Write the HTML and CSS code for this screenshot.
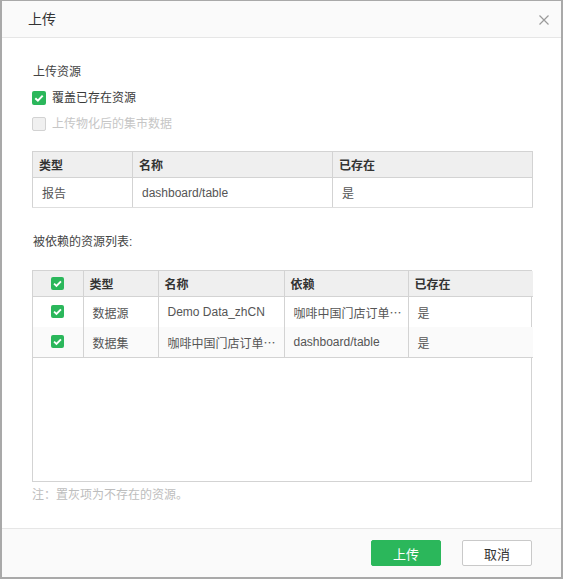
FILE: index.html
```html
<!DOCTYPE html>
<html lang="zh-CN">
<head>
<meta charset="utf-8">
<title>上传</title>
<link rel="stylesheet" href="styles.css">
</head>
<body>
<div class="dialog">
  <div class="dlg-header">
    <span class="dlg-title">上传</span>
    <span class="dlg-close">
      <svg width="10" height="10" viewBox="0 0 10 10"><path d="M0.5 0.5L9.5 9.5M9.5 0.5L0.5 9.5" stroke="#9a9a9a" stroke-width="1.2" fill="none"/></svg>
    </span>
  </div>
  <div class="dlg-body">
    <div class="section-title">上传资源</div>
    <label class="check-row first">
      <span class="cb checked"><svg width="14" height="14" viewBox="0 0 14 14"><path d="M3.3 7.2L5.9 9.7L10.7 4.6" stroke="#fff" stroke-width="2" fill="none"/></svg></span>
      <span class="check-label">覆盖已存在资源</span>
    </label>
    <label class="check-row second">
      <span class="cb disabled"></span>
      <span class="check-label muted">上传物化后的集市数据</span>
    </label>

    <table class="grid grid-main">
      <colgroup><col class="w100"><col class="w200"><col class="w200"></colgroup>
      <thead>
        <tr><th>类型</th><th>名称</th><th>已存在</th></tr>
      </thead>
      <tbody>
        <tr><td>报告</td><td>dashboard/table</td><td>是</td></tr>
      </tbody>
    </table>

    <div class="section-title dep-title">被依赖的资源列表:</div>

    <div class="grid-box">
      <table class="grid grid-dep">
        <colgroup><col class="w50"><col class="w75"><col class="w126"><col class="w124"><col class="w125"></colgroup>
        <thead>
          <tr>
            <th class="cb-cell"><span class="cb checked small"><svg width="13" height="13" viewBox="0 0 14 14"><path d="M3.3 7.2L5.9 9.7L10.7 4.6" stroke="#fff" stroke-width="2" fill="none"/></svg></span></th>
            <th>类型</th><th>名称</th><th>依赖</th><th>已存在</th>
          </tr>
        </thead>
        <tbody>
          <tr>
            <td class="cb-cell"><span class="cb checked small"><svg width="13" height="13" viewBox="0 0 14 14"><path d="M3.3 7.2L5.9 9.7L10.7 4.6" stroke="#fff" stroke-width="2" fill="none"/></svg></span></td>
            <td>数据源</td><td>Demo Data_zhCN</td><td>咖啡中国门店订单⋯</td><td>是</td>
          </tr>
          <tr class="alt last">
            <td class="cb-cell"><span class="cb checked small"><svg width="13" height="13" viewBox="0 0 14 14"><path d="M3.3 7.2L5.9 9.7L10.7 4.6" stroke="#fff" stroke-width="2" fill="none"/></svg></span></td>
            <td>数据集</td><td>咖啡中国门店订单⋯</td><td>dashboard/table</td><td>是</td>
          </tr>
        </tbody>
      </table>
    </div>

    <div class="note">注：置灰项为不存在的资源。</div>
  </div>
  <div class="dlg-footer">
    <button class="btn btn-primary">上传</button>
    <button class="btn btn-default">取消</button>
  </div>
</div>
</body>
</html>
```

FILE: styles.css
```css
html, body {
  margin: 0;
  padding: 0;
  background: #ffffff;
}

body {
  font-family: "Liberation Sans", "Noto Sans CJK SC", sans-serif;
  font-size: 12px;
  color: #444;
}

.dialog {
  width: 563px;
  height: 579px;
  box-sizing: border-box;
  border-style: solid;
  border-color: #a9a9a9;
  border-width: 1px 2px 2px 2px;
  display: flex;
  flex-direction: column;
  background: #fff;
}

.dlg-header {
  height: 36px;
  flex: 0 0 36px;
  background: #fafafa;
  border-bottom: 1px solid #e6e6e6;
  display: flex;
  align-items: center;
  justify-content: space-between;
  padding: 0 12px 0 26px;
}

.dlg-title {
  font-size: 14px;
  color: #333;
  line-height: 20px;
}

.dlg-close {
  display: flex;
  width: 10px;
  height: 10px;
  margin-top: 1px;
}

.dlg-body {
  flex: 1 1 auto;
  padding: 24px 29px 0 30px;
  display: flex;
  flex-direction: column;
}

.section-title {
  line-height: 20px;
  height: 20px;
  color: #444;
  padding-left: 1px;
}

.check-row {
  display: flex;
  align-items: center;
  height: 20px;
  gap: 6px;
}

.check-row.first {
  margin-top: 6px;
}

.check-row.second {
  margin-top: 6px;
}

.check-label {
  color: #3a3a3a;
  line-height: 20px;
}

.check-label.muted {
  color: #c6c6c6;
}

.cb {
  width: 14px;
  height: 14px;
  box-sizing: border-box;
  border-radius: 2px;
  display: inline-flex;
  flex: 0 0 auto;
}

.cb.checked {
  background: #2bb75b;
}

.cb.small {
  width: 13px;
  height: 13px;
}

.cb.disabled {
  background: #f0f0f0;
  border: 1px solid #d2d2d2;
}

.grid {
  border-collapse: collapse;
  table-layout: fixed;
  width: 500px;
}

.grid-main {
  margin-top: 17px;
  border: 1px solid #d3d3d3;
}

.grid th {
  background: #efefef;
  font-weight: bold;
  color: #333;
  text-align: left;
  height: 25px;
  padding: 0 6px;
  border: 1px solid #d3d3d3;
  white-space: nowrap;
}

.grid td {
  height: 29px;
  padding: 0 9px;
  border-left: 1px solid #d3d3d3;
  border-right: 1px solid #d3d3d3;
  color: #555;
  white-space: nowrap;
  overflow: hidden;
}

.grid-main tbody tr td {
  border-bottom: 1px solid #dedede;
}

.w100 { width: 100px; }
.w200 { width: 200px; }
.w50 { width: 50px; }
.w75 { width: 75px; }
.w126 { width: 126px; }
.w124 { width: 124px; }
.w125 { width: 125px; }

.dep-title {
  margin-top: 24px;
}

.grid-box {
  margin-top: 18px;
  width: 500px;
  height: 212px;
  box-sizing: border-box;
  border: 1px solid #d3d3d3;
}

.grid-dep {
  width: 498px;
}

.grid-dep th {
  border-top: none;
}

.grid-dep th:first-child,
.grid-dep td:first-child {
  border-left: none;
}

.grid-dep th:last-child,
.grid-dep td:last-child {
  border-right: none;
}

.grid-dep td {
  height: 30px;
}

.grid-dep tr.alt td {
  background: #fafafa;
}

.grid-dep tr.last td {
  border-bottom: 1px solid #d3d3d3;
}

.grid .cb-cell {
  text-align: center;
  padding: 0;
}

.grid .cb-cell .cb {
  vertical-align: middle;
  margin-top: -2px;
}

.note {
  margin-top: 4px;
  line-height: 18px;
  color: #bdbdbd;
}

.dlg-footer {
  flex: 0 0 48px;
  height: 48px;
  background: #fafafa;
  border-top: 1px solid #e6e6e6;
  display: flex;
  align-items: center;
  justify-content: flex-end;
  padding-right: 29px;
  gap: 21px;
}

.btn {
  width: 70px;
  height: 26px;
  box-sizing: border-box;
  border-radius: 2px;
  font-family: "Liberation Sans", "Noto Sans CJK SC", sans-serif;
  font-size: 13px;
  padding: 0;
  cursor: pointer;
}

.btn-primary {
  background: #2bb75b;
  border: 1px solid #2bb75b;
  color: #fff;
}

.btn-default {
  background: #fff;
  border: 1px solid #c9c9c9;
  color: #333;
}
```
